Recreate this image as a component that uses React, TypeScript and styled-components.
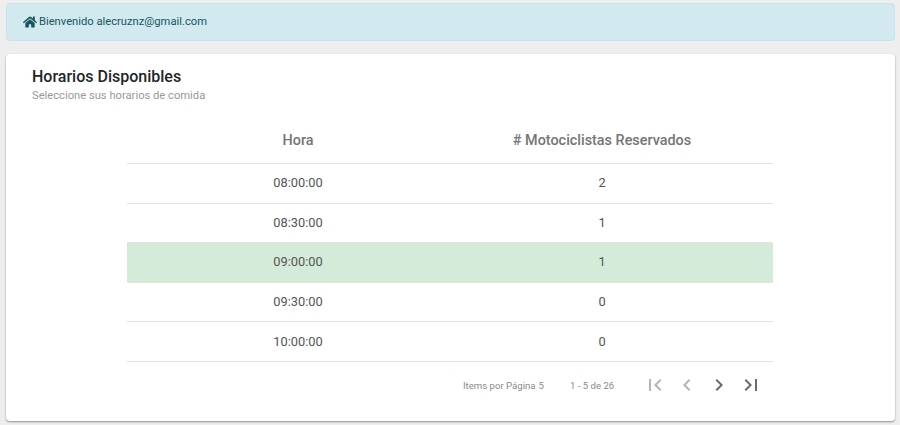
import React from "react";
import styled, { createGlobalStyle } from "styled-components";
import { FaHome } from "react-icons/fa";

const GlobalStyle = createGlobalStyle`
  html, body {
    margin: 0;
    padding: 0;
    background: #eeeeee;
    font-family: Roboto, "Liberation Sans", sans-serif;
  }
`;

const rows = [
  { hora: "08:00:00", count: 2 },
  { hora: "08:30:00", count: 1 },
  { hora: "09:00:00", count: 1, selected: true },
  { hora: "09:30:00", count: 0 },
  { hora: "10:00:00", count: 0 },
];

const FIRST = "M18.41 16.59L13.82 12l4.59-4.59L17 6l-6 6 6 6zM6 6h2v12H6z";
const PREV = "M15.41 7.41L14 6l-6 6 6 6 1.41-1.41L10.83 12z";
const NEXT = "M10 6L8.59 7.41 13.17 12l-4.58 4.59L10 18l6-6z";
const LAST = "M5.59 7.41L10.18 12l-4.59 4.59L7 18l6-6-6-6zM16 6h2v12h-2z";

const App: React.FC = () => {
  return (
    <Page>
      <GlobalStyle />
      <Alert>
        <FaHome size={14} />
        <span>Bienvenido alecruznz@gmail.com</span>
      </Alert>
      <Card>
        <Title>Horarios Disponibles</Title>
        <Subtitle>Seleccione sus horarios de comida</Subtitle>
        <TableWrap>
          <Table>
            <thead>
              <tr>
                <HeadCell>Hora</HeadCell>
                <HeadCell># Motociclistas Reservados</HeadCell>
              </tr>
            </thead>
            <tbody>
              {rows.map((row) => (
                <Row key={row.hora} $selected={row.selected}>
                  <Cell>{row.hora}</Cell>
                  <Cell>{row.count}</Cell>
                </Row>
              ))}
            </tbody>
          </Table>
          <Paginator>
            <PageLabel>Items por Página</PageLabel>
            <PageSize>5</PageSize>
            <Range>1 - 5 de 26</Range>
            <NavGroup>
              <NavIcon d={FIRST} disabled />
              <NavIcon d={PREV} disabled />
              <NavIcon d={NEXT} />
              <NavIcon d={LAST} />
            </NavGroup>
          </Paginator>
        </TableWrap>
      </Card>
    </Page>
  );
};

const NavIcon: React.FC<{ d: string; disabled?: boolean }> = ({ d, disabled }) => (
  <NavButton $disabled={disabled}>
    <svg width="24" height="24" viewBox="0 0 24 24" fill="currentColor">
      <path d={d} />
    </svg>
  </NavButton>
);

export default App;

const Page = styled.div`
  box-sizing: border-box;
  height: 425px;
  overflow: hidden;
  padding: 3px 5px 0 6px;
  display: flex;
  flex-direction: column;
  gap: 13px;
`;

const Alert = styled.div`
  box-sizing: border-box;
  height: 38px;
  display: flex;
  align-items: center;
  gap: 2px;
  padding: 0 16px 1px;
  background: #d1e9ef;
  border: 1px solid #c6e4ec;
  border-radius: 4px;
  color: #16565f;
  font-size: 11.2px;
`;

const Card = styled.div`
  box-sizing: border-box;
  height: 367px;
  padding: 13px 27px 0 26px;
  background: #ffffff;
  border-radius: 4px;
  box-shadow: 0 1px 2px rgba(0, 0, 0, 0.4);
`;

const Title = styled.div`
  font-size: 16px;
  font-weight: 500;
  line-height: 19px;
  color: #212529;
`;

const Subtitle = styled.div`
  margin-top: 2px;
  font-size: 11.2px;
  line-height: 16px;
  color: #999999;
`;

const TableWrap = styled.div`
  width: 646px;
  margin: 0 auto;
  padding-top: 12px;
`;

const Table = styled.table`
  width: 100%;
  border-collapse: collapse;
  table-layout: fixed;
`;

const HeadCell = styled.th`
  height: 45px;
  padding: 2px 0 0;
  border-bottom: 1px solid #e3e3e3;
  font-size: 14.4px;
  font-weight: 500;
  color: #757575;
  text-align: center;

  &:first-child {
    padding-left: 19px;
  }
  &:last-child {
    padding-right: 19px;
  }
`;

const Row = styled.tr<{ $selected?: boolean }>`
  background: ${(p) => (p.$selected ? "#d4ebd9" : "transparent")};
`;

const Cell = styled.td`
  height: 37.6px;
  padding: 0 0 1px;
  border-bottom: 1px solid #e3e3e3;
  font-size: 12.8px;
  color: #555555;
  text-align: center;

  &:first-child {
    padding-left: 19px;
  }
  &:last-child {
    padding-right: 19px;
  }
`;

const Paginator = styled.div`
  display: flex;
  align-items: center;
  height: 47px;
  padding-left: 336px;
  font-size: 9.6px;
  color: #8a8a8a;
`;

const PageLabel = styled.span``;

const PageSize = styled.span`
  margin-left: 3px;
`;

const Range = styled.span`
  margin-left: 26px;
`;

const NavGroup = styled.div`
  display: flex;
  margin-left: 29px;
  gap: 8px;
`;

const NavButton = styled.div<{ $disabled?: boolean }>`
  display: flex;
  color: ${(p) => (p.$disabled ? "#b5b5b5" : "#6b6b6b")};
`;
